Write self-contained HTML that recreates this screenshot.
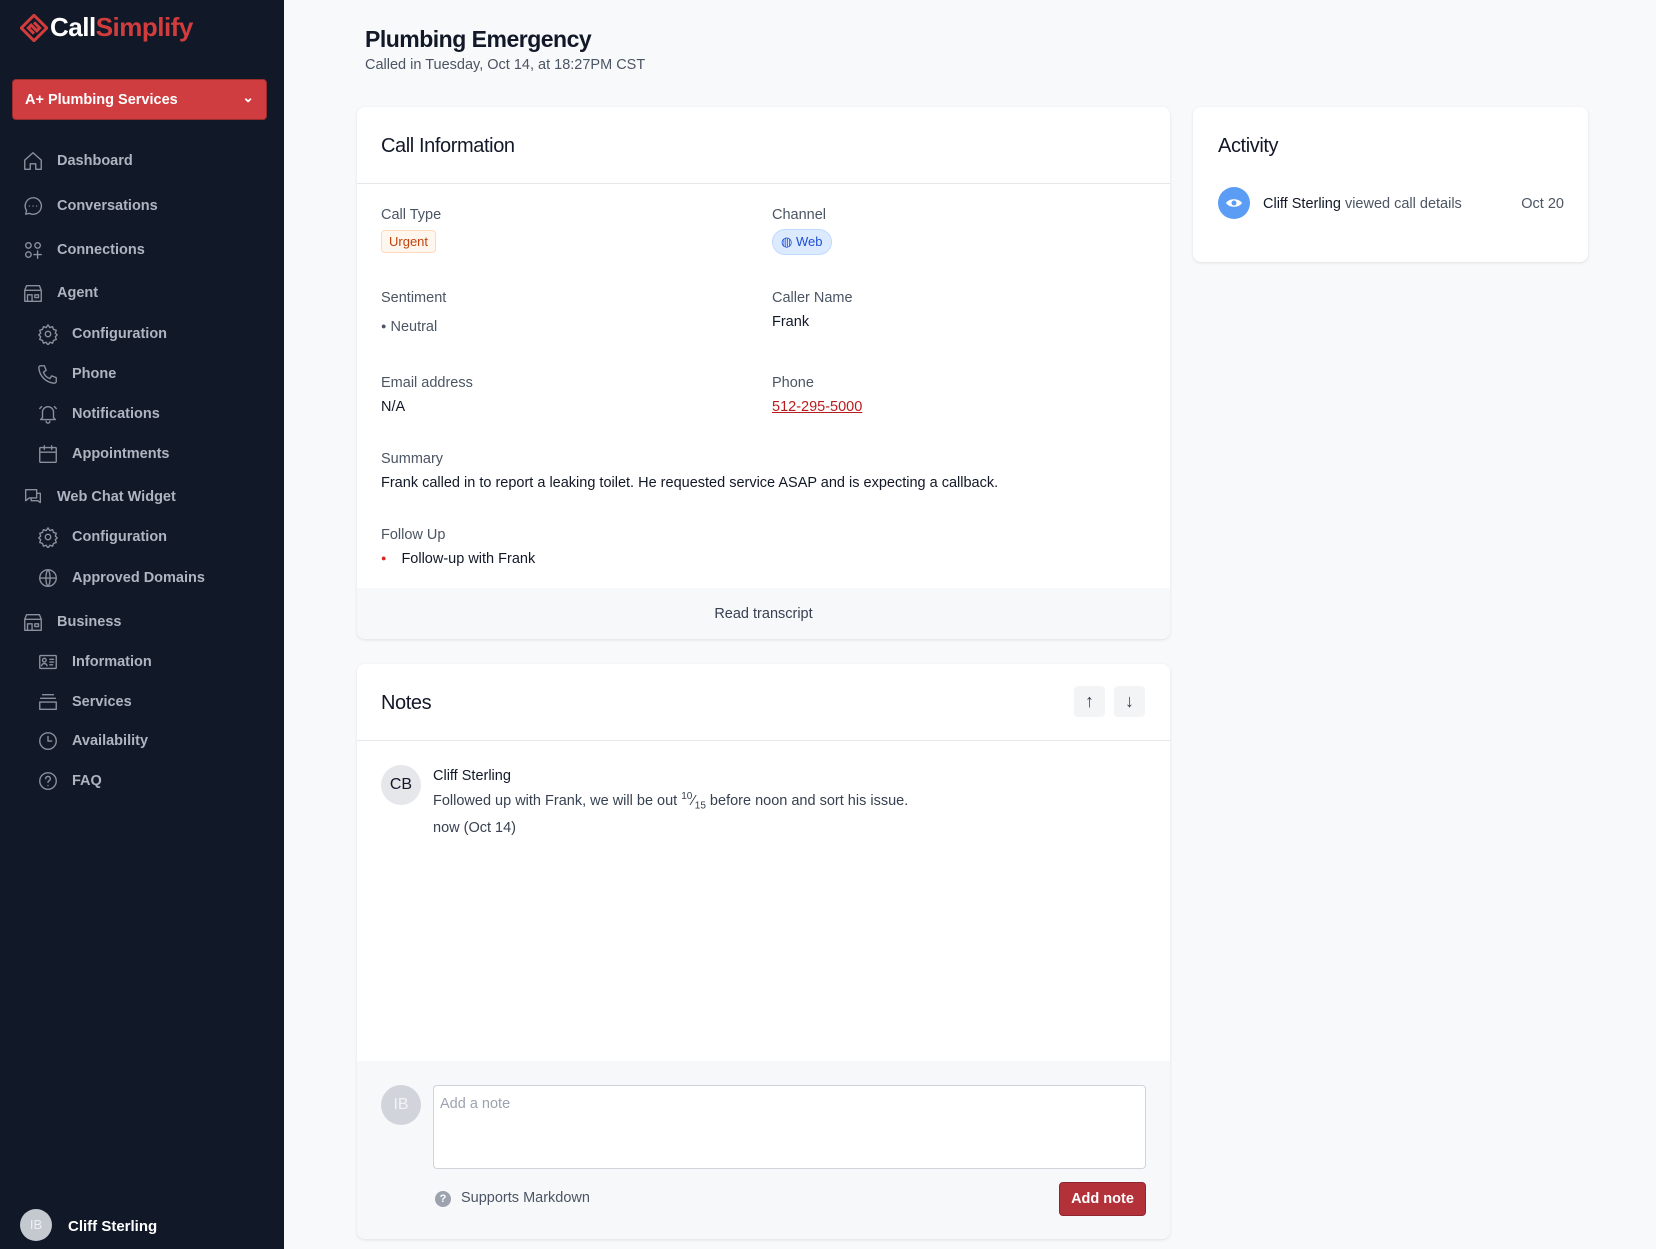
<!DOCTYPE html>
<html><head><meta charset="utf-8"><style>
*{box-sizing:border-box;margin:0;padding:0}
body{width:1656px;height:1249px;background:#f8f9fb;font-family:"Liberation Sans",sans-serif;position:relative;overflow:hidden;color:#111827}
.a{position:absolute}
#sb{left:0;top:0;width:284px;height:1249px;background:#111827}
.nav{position:absolute;left:22px;color:#aeb4c0;font-size:14.5px;font-weight:bold;display:flex;align-items:center}
.nav svg{width:22px;height:22px;margin-right:13px;stroke:#8a909c;fill:none;stroke-width:1.5;stroke-linecap:round;stroke-linejoin:round}
.sub{left:37px}
.card{position:absolute;background:#fff;border-radius:8px;box-shadow:0 1px 3px rgba(0,0,0,.1);overflow:hidden}
.lbl{position:absolute;font-size:14.5px;color:#4b5563}
.val{position:absolute;font-size:14.5px;color:#111827}
</style></head><body>
<div id="sb" class="a">
 <div class="a" style="left:20px;top:12px;display:flex;align-items:center">
  <svg width="28" height="28" viewBox="0 0 28 28"><g transform="rotate(45 14 14)" fill="none" stroke="#d13d3d" stroke-width="3"><rect x="5" y="5" width="18" height="18"/><path d="M10 10h8v4h-8v4h8"/></g></svg>
  <span style="font-size:26px;font-weight:bold;color:#fff;letter-spacing:-.5px;margin-left:2px">Call</span><span style="font-size:26px;font-weight:bold;color:#d13d3d;letter-spacing:-.5px">Simplify</span>
 </div>
 <div class="a" style="left:12px;top:79px;width:255px;height:41px;background:#cf3d40;border:1px solid #9b2c2c;border-radius:4px;color:#fff;font-size:14.5px;font-weight:bold;padding:12px 12px">A+ Plumbing Services<span style="position:absolute;right:12px;top:9px;font-size:14px">⌄</span></div>
 <div class="nav" style="top:150px"><svg viewBox="0 0 24 24"><path d="M3 11l9-8 9 8v10h-6v-6h-6v6H3z"/></svg>Dashboard</div>
 <div class="nav" style="top:195px"><svg viewBox="0 0 24 24"><path d="M12 3a9 9 0 1 1-4 17l-4 1 1-4A9 9 0 0 1 12 3z"/><path d="M8 12h.01M12 12h.01M16 12h.01"/></svg>Conversations</div>
 <div class="nav" style="top:239px"><svg viewBox="0 0 24 24"><circle cx="7" cy="7" r="3"/><circle cx="17" cy="7" r="3"/><circle cx="7" cy="17" r="3"/><path d="M17 13v8M13 17h8"/></svg>Connections</div>
 <div class="nav" style="top:282px"><svg viewBox="0 0 24 24"><path d="M3 9l2-5h14l2 5M3 9v12h18V9M3 9h18M6 21v-7h5v7M14 14h4v3h-4z"/></svg>Agent</div>
 <div class="nav sub" style="top:323px"><svg viewBox="0 0 24 24"><circle cx="12" cy="12" r="3"/><path d="M12 2l2 3 3-1 1 3 3 1-1 3 2 2-2 2 1 3-3 1-1 3-3-1-2 3-2-3-3 1-1-3-3-1 1-3-2-2 2-2-1-3 3-1 1-3 3 1z"/></svg>Configuration</div>
 <div class="nav sub" style="top:363px"><svg viewBox="0 0 24 24"><path d="M4 3h4l2 5-3 2a11 11 0 0 0 7 7l2-3 5 2v4a2 2 0 0 1-2 2A18 18 0 0 1 2 5a2 2 0 0 1 2-2z"/></svg>Phone</div>
 <div class="nav sub" style="top:403px"><svg viewBox="0 0 24 24"><path d="M6 16V10a6 6 0 0 1 12 0v6l2 2H4zM10 20a2 2 0 0 0 4 0M3 6l2-2M21 6l-2-2"/></svg>Notifications</div>
 <div class="nav sub" style="top:443px"><svg viewBox="0 0 24 24"><rect x="3" y="5" width="18" height="16" rx="1"/><path d="M3 10h18M8 3v4M16 3v4"/></svg>Appointments</div>
 <div class="nav" style="top:486px"><svg viewBox="0 0 24 24"><path d="M4 4h12v9H8l-4 3zM16 8h4v10l-3-2h-7v-3"/></svg>Web Chat Widget</div>
 <div class="nav sub" style="top:526px"><svg viewBox="0 0 24 24"><circle cx="12" cy="12" r="3"/><path d="M12 2l2 3 3-1 1 3 3 1-1 3 2 2-2 2 1 3-3 1-1 3-3-1-2 3-2-3-3 1-1-3-3-1 1-3-2-2 2-2-1-3 3-1 1-3 3 1z"/></svg>Configuration</div>
 <div class="nav sub" style="top:567px"><svg viewBox="0 0 24 24"><circle cx="12" cy="12" r="9"/><path d="M3 12h18M12 3c3 3 3 15 0 18M12 3c-3 3-3 15 0 18"/></svg>Approved Domains</div>
 <div class="nav" style="top:611px"><svg viewBox="0 0 24 24"><path d="M3 9l2-5h14l2 5M3 9v12h18V9M3 9h18M6 21v-7h5v7M14 14h4v3h-4z"/></svg>Business</div>
 <div class="nav sub" style="top:651px"><svg viewBox="0 0 24 24"><rect x="3" y="5" width="18" height="14" rx="1"/><circle cx="8" cy="10" r="2"/><path d="M5 16c1-3 5-3 6 0M14 9h4M14 12h4M14 15h3"/></svg>Information</div>
 <div class="nav sub" style="top:691px"><svg viewBox="0 0 24 24"><path d="M6 4h12M4 8h16M3 12h18v8H3z"/></svg>Services</div>
 <div class="nav sub" style="top:730px"><svg viewBox="0 0 24 24"><circle cx="12" cy="12" r="9"/><path d="M12 7v5h4"/></svg>Availability</div>
 <div class="nav sub" style="top:770px"><svg viewBox="0 0 24 24"><circle cx="12" cy="12" r="9"/><path d="M9.5 9.5a2.5 2.5 0 1 1 3.5 2.3c-.7.3-1 .9-1 1.7M12 17h.01"/></svg>FAQ</div>
 <div class="a" style="left:20px;top:1209px;width:32px;height:32px;border-radius:50%;background:#c4c8cf;color:#eef0f3;font-size:13px;text-align:center;line-height:32px">IB</div>
 <div class="a" style="left:68px;top:1218px;color:#fff;font-weight:bold;font-size:15px">Cliff Sterling</div>
</div>

<div class="a" style="left:365px;top:26px;font-size:23px;font-weight:bold;letter-spacing:-.5px">Plumbing Emergency</div>
<div class="a" style="left:365px;top:57px;font-size:14.5px;color:#4b5563">Called in Tuesday, Oct 14, at 18:27PM CST</div>

<div class="card" style="left:357px;top:107px;width:813px;height:532px">
 <div class="a" style="left:24px;top:28px;font-size:20px;letter-spacing:-.4px">Call Information</div>
 <div class="a" style="left:0;top:76px;width:100%;height:1px;background:#e5e7eb"></div>
 <div class="lbl" style="left:24px;top:100px">Call Type</div>
 <div class="a" style="left:24px;top:123px;border:1px solid #fcd9bd;background:#fff7ed;color:#c2410c;font-size:13px;padding:3px 7px;border-radius:4px">Urgent</div>
 <div class="lbl" style="left:415px;top:100px">Channel</div>
 <div class="a" style="left:415px;top:122px;border:1px solid #bfdbfe;background:#dbeafe;color:#1d4ed8;font-size:13px;padding:4px 9px 4px 8px;border-radius:13px">◍ Web</div>
 <div class="lbl" style="left:24px;top:183px">Sentiment</div>
 <div class="val" style="left:24px;top:212px;color:#4b5563"><span style="font-size:9px;vertical-align:2px">●</span> Neutral</div>
 <div class="lbl" style="left:415px;top:183px">Caller Name</div>
 <div class="val" style="left:415px;top:207px">Frank</div>
 <div class="lbl" style="left:24px;top:268px">Email address</div>
 <div class="val" style="left:24px;top:292px">N/A</div>
 <div class="lbl" style="left:415px;top:268px">Phone</div>
 <div class="val" style="left:415px;top:292px;color:#b91c1c;text-decoration:underline">512-295-5000</div>
 <div class="lbl" style="left:24px;top:344px">Summary</div>
 <div class="val" style="left:24px;top:368px">Frank called in to report a leaking toilet. He requested service ASAP and is expecting a callback.</div>
 <div class="lbl" style="left:24px;top:420px">Follow Up</div>
 <div class="val" style="left:24px;top:444px"><span style="color:#dc2626;font-size:9px;vertical-align:2px;margin-right:15px">●</span>Follow-up with Frank</div>
 <div class="a" style="left:0;top:481px;width:100%;height:51px;background:#f7f8fa;text-align:center;line-height:53px;font-size:14.5px;color:#374151">Read transcript</div>
</div>

<div class="card" style="left:357px;top:664px;width:813px;height:575px">
 <div class="a" style="left:24px;top:28px;font-size:20px;letter-spacing:-.4px">Notes</div>
 <div class="a" style="left:717px;top:22px;width:31px;height:31px;background:#f3f4f6;border-radius:4px;text-align:center;line-height:30px;font-size:18px;color:#374151">↑</div>
 <div class="a" style="left:757px;top:22px;width:31px;height:31px;background:#f3f4f6;border-radius:4px;text-align:center;line-height:30px;font-size:18px;color:#374151">↓</div>
 <div class="a" style="left:0;top:76px;width:100%;height:1px;background:#e5e7eb"></div>
 <div class="a" style="left:24px;top:101px;width:40px;height:40px;border-radius:50%;background:#e5e7eb;text-align:center;line-height:40px;font-size:16px">CB</div>
 <div class="val" style="left:76px;top:104px">Cliff Sterling</div>
 <div class="val" style="left:76px;top:127px;color:#374151">Followed up with Frank, we will be out <sup style="font-size:10px">10</sup>⁄<sub style="font-size:10px">15</sub> before noon and sort his issue.</div>
 <div class="val" style="left:76px;top:156px;color:#374151">now (Oct 14)</div>
 <div class="a" style="left:0;top:397px;width:100%;height:178px;background:#f7f8fa"></div>
 <div class="a" style="left:24px;top:421px;width:40px;height:40px;border-radius:50%;background:#d1d5db;color:#f3f4f6;text-align:center;line-height:40px;font-size:16px">IB</div>
 <div class="a" style="left:76px;top:421px;width:713px;height:84px;background:#fff;border:1px solid #cfd3da;border-radius:4px;padding:10px 6px;font-size:14.5px;color:#9ca3af">Add a note</div>
 <div class="a" style="left:78px;top:527px;width:16px;height:16px;border-radius:50%;background:#9ca3af;color:#fff;font-size:11px;text-align:center;line-height:16px;font-weight:bold">?</div>
 <div class="a" style="left:104px;top:526px;font-size:14.5px;color:#4b5563">Supports Markdown</div>
 <div class="a" style="left:702px;top:518px;width:87px;height:34px;background:#b3323a;border:1px solid #8f2530;border-radius:4px;color:#fff;font-weight:bold;font-size:14.5px;text-align:center;line-height:32px">Add note</div>
</div>

<div class="card" style="left:1193px;top:107px;width:395px;height:155px">
 <div class="a" style="left:25px;top:28px;font-size:20px;letter-spacing:-.4px">Activity</div>
 <div class="a" style="left:25px;top:80px;width:32px;height:32px;border-radius:50%;background:#5b9cf5"><svg width="32" height="32" viewBox="0 0 32 32"><path d="M8 16c3-5 13-5 16 0-3 5-13 5-16 0z" fill="#fff"/><circle cx="16" cy="16" r="2.5" fill="#5b9cf5"/></svg></div>
 <div class="a" style="left:70px;top:89px;font-size:14.5px;color:#111827">Cliff Sterling <span style="color:#4b5563">viewed call details</span></div>
 <div class="a" style="right:24px;top:89px;font-size:14.5px;color:#4b5563">Oct 20</div>
</div>
</body></html>
